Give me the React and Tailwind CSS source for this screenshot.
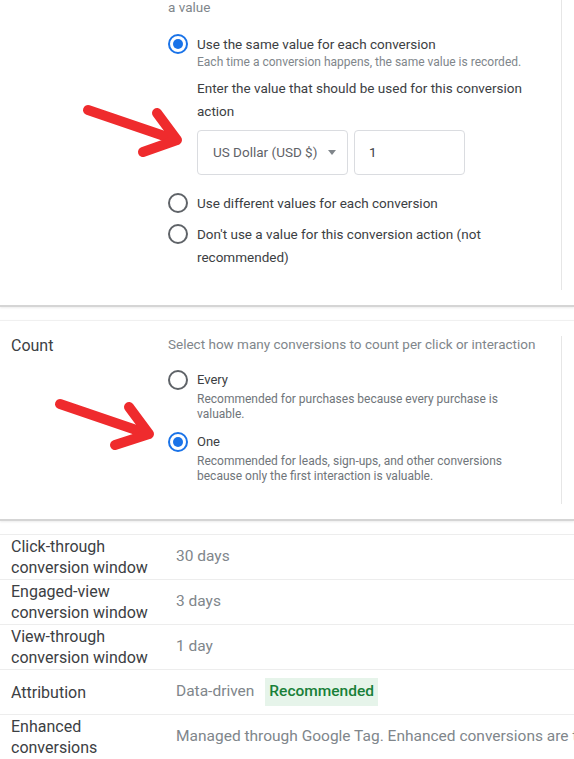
import React from "react";

function Radio({ checked }) {
  return checked ? (
    <span className="flex h-[20px] w-[20px] shrink-0 items-center justify-center rounded-full border-2 border-[#1a73e8]">
      <span className="h-[10px] w-[10px] rounded-full bg-[#1a73e8]" />
    </span>
  ) : (
    <span className="block h-[20px] w-[20px] shrink-0 rounded-full border-2 border-[#5f6368]" />
  );
}

function Arrows() {
  return (
    <svg
      className="pointer-events-none absolute left-0 top-0"
      width="574"
      height="759"
      viewBox="0 0 574 759"
    >
      <g stroke="#ef2b2d" strokeWidth="10" strokeLinecap="round" strokeLinejoin="round" fill="none">
        <path d="M88 110 L176 140" />
        <path d="M157 113 L177 140 L143 152" />
        <path d="M60 404 L148 434" />
        <path d="M129 407 L149 434 L115 445" />
      </g>
    </svg>
  );
}

const rows = [
  { label: ["Click-through", "conversion window"], value: "30 days" },
  { label: ["Engaged-view", "conversion window"], value: "3 days" },
  { label: ["View-through", "conversion window"], value: "1 day" },
  { label: ["Attribution"], value: "Data-driven", badge: "Recommended" },
  {
    label: ["Enhanced", "conversions"],
    value: "Managed through Google Tag. Enhanced conversions are turned on for this account.",
  },
];

export default function App() {
  return (
    <div className="relative h-[759px] w-[574px] overflow-hidden bg-white font-['Roboto','Liberation_Sans',sans-serif] text-[#3c4043]">
      {/* value card */}
      <section className="flex border-b-2 border-[#d5d5d5] shadow-[0_1px_2px_rgba(0,0,0,0.08)]">
        <div className="w-[168px] shrink-0" />
        <div className="flex-1 pb-[36px]">
          <p className="text-[13.5px] leading-[14px] text-[#80868b]">a value</p>

          <div className="mt-[20px] flex gap-[9px]">
            <Radio checked />
            <div className="w-[332px]">
              <p className="text-[13.5px] leading-[20px]">Use the same value for each conversion</p>
              <p className="text-[12px] leading-[16px] text-[#80868b]">
                Each time a conversion happens, the same value is recorded.
              </p>
              <p className="mt-[7px] text-[13.5px] leading-[23px]">
                Enter the value that should be used for this conversion action
              </p>
              <div className="mt-[7px] flex gap-[6px]">
                <div className="flex h-[45px] w-[151px] items-center rounded-[4px] border border-[#dadce0] pl-[15px] text-[13.5px] text-[#5f6368]">
                  US Dollar (USD $)
                  <span className="ml-[11px] h-0 w-0 border-x-[4px] border-t-[5px] border-x-transparent border-t-[#80868b]" />
                </div>
                <div className="flex h-[45px] w-[111px] items-center rounded-[4px] border border-[#dadce0] pl-[14px] text-[13.5px]">
                  1
                </div>
              </div>
            </div>
          </div>

          <div className="mt-[18px] flex items-center gap-[9px]">
            <Radio />
            <p className="text-[13.5px] leading-[20px]">Use different values for each conversion</p>
          </div>

          <div className="mt-[10px] flex gap-[9px]">
            <span className="shrink-0 pt-[1px]">
              <Radio />
            </span>
            <p className="w-[332px] text-[13.5px] leading-[23px]">
              Don't use a value for this conversion action (not recommended)
            </p>
          </div>
        </div>
        <div className="mb-[15px] w-[13px] shrink-0 border-l border-[#e6e6e6]" />
      </section>

      {/* count card */}
      <section className="mt-[13px] flex border-t border-b-2 border-t-[#f0f0f0] border-b-[#d5d5d5] shadow-[0_1px_2px_rgba(0,0,0,0.08)]">
        <div className="w-[168px] shrink-0 pl-[11px] pt-[15px] text-[16px] leading-[20px]">Count</div>
        <div className="flex-1 pb-[35px] pt-[13px]">
          <p className="text-[13.5px] leading-[20px] text-[#80868b]">
            Select how many conversions to count per click or interaction
          </p>

          <div className="mt-[16px] flex gap-[9px]">
            <Radio />
            <div>
              <p className="text-[13px] leading-[20px]">Every</p>
              <p className="mt-[2px] w-[320px] text-[12px] leading-[15px] text-[#70757a]">
                Recommended for purchases because every purchase is valuable.
              </p>
            </div>
          </div>

          <div className="mt-[10px] flex gap-[9px]">
            <Radio checked />
            <div>
              <p className="text-[13px] leading-[20px]">One</p>
              <p className="mt-[2px] w-[320px] text-[12px] leading-[15px] text-[#70757a]">
                Recommended for leads, sign-ups, and other conversions because only the first interaction is valuable.
              </p>
            </div>
          </div>
        </div>
        <div className="mb-[15px] mt-[15px] w-[13px] shrink-0 border-l border-[#e6e6e6]" />
      </section>

      {/* settings table */}
      <div className="mt-[13px]">
        {rows.map((row) => (
          <div key={row.label.join(" ")} className="flex h-[45px] items-center border-t border-[#ededed]">
            <div className="w-[176px] shrink-0 pl-[11px] text-[16px] leading-[21px]">
              {row.label.map((l) => (
                <div key={l}>{l}</div>
              ))}
            </div>
            <div className="flex items-center whitespace-nowrap text-[15.5px] text-[#80868b]">
              {row.value}
              {row.badge && (
                <span className="ml-[11px] bg-[#e6f4ea] px-[4px] py-[2px] font-medium text-[#188038]">
                  {row.badge}
                </span>
              )}
            </div>
          </div>
        ))}
      </div>

      <Arrows />
    </div>
  );
}
